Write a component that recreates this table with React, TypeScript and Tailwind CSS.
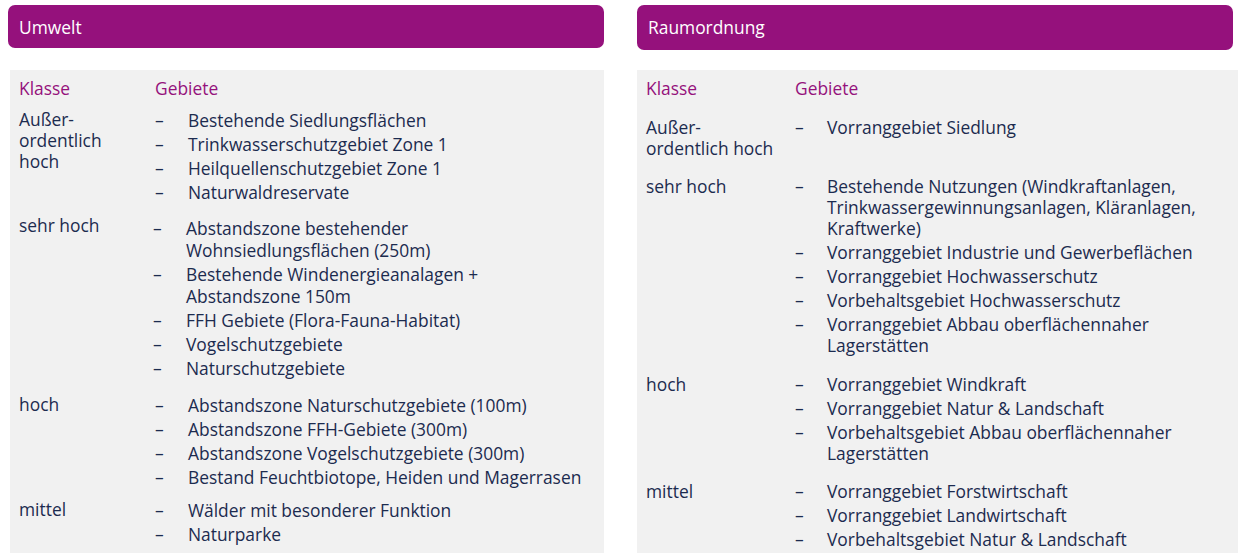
import React from "react";

type Group = {
    label: React.ReactNode;
    items: React.ReactNode[];
    top: string;
    itemsClass?: string;
};

const leftGroups: Group[] = [
    {
        label: (<>Außer-<br />ordentlich<br />hoch</>),
        items: [
            "Bestehende Siedlungsflächen",
            "Trinkwasserschutzgebiet Zone 1",
            "Heilquellenschutzgebiet Zone 1",
            "Naturwaldreservate",
        ],
        top: "mt-[10px]",
    },
    {
        label: "sehr hoch",
        items: [
            (<>Abstandszone bestehender<br />Wohnsiedlungsflächen (250m)</>),
            (<>Bestehende Windenergieanalagen +<br />Abstandszone 150m</>),
            "FFH Gebiete (Flora-Fauna-Habitat)",
            "Vogelschutzgebiete",
            "Naturschutzgebiete",
        ],
        top: "mt-[12px]",
        itemsClass: "mt-[2px] -ml-[2px]",
    },
    {
        label: "hoch",
        items: [
            "Abstandszone Naturschutzgebiete (100m)",
            "Abstandszone FFH-Gebiete (300m)",
            "Abstandszone Vogelschutzgebiete (300m)",
            "Bestand Feuchtbiotope, Heiden und Magerrasen",
        ],
        top: "mt-[15px]",
    },
    {
        label: "mittel",
        items: ["Wälder mit besonderer Funktion", "Naturparke"],
        top: "mt-[11px]",
    },
];

const rightGroups: Group[] = [
    {
        label: (<>Außer-<br />ordentlich hoch</>),
        items: ["Vorranggebiet Siedlung"],
        top: "mt-[18px]",
    },
    {
        label: "sehr hoch",
        items: [
            (<>Bestehende Nutzungen (Windkraftanlagen,<br />Trinkwassergewinnungsanlagen, Kläranlagen,<br />Kraftwerke)</>),
            "Vorranggebiet Industrie und Gewerbeflächen",
            "Vorranggebiet Hochwasserschutz",
            "Vorbehaltsgebiet Hochwasserschutz",
            (<>Vorranggebiet Abbau oberflächennaher<br />Lagerstätten</>),
        ],
        top: "mt-[17px]",
    },
    {
        label: "hoch",
        items: [
            "Vorranggebiet Windkraft",
            "Vorranggebiet Natur & Landschaft",
            (<>Vorbehaltsgebiet Abbau oberflächennaher<br />Lagerstätten</>),
        ],
        top: "mt-[18px]",
    },
    {
        label: "mittel",
        items: [
            "Vorranggebiet Forstwirtschaft",
            "Vorranggebiet Landwirtschaft",
            "Vorbehaltsgebiet Natur & Landschaft",
        ],
        top: "mt-[17px]",
    },
];

function Panel({
    title,
    groups,
    labelW,
    dashW,
    leading,
    gap,
    bodyClass,
}: {
    title: string;
    groups: Group[];
    labelW: string;
    dashW: string;
    leading: string;
    gap: string;
    bodyClass: string;
}) {
    return (
        <div className="flex flex-col">
            <div className="h-[45px] w-[596px] rounded-[7px] bg-[#95117c] px-[11px] flex items-center text-white">
                {title}
            </div>
            <div className={bodyClass}>
                <div className="flex leading-[21px] text-[#95117c]">
                    <div className={labelW}>Klasse</div>
                    <div>Gebiete</div>
                </div>
                {groups.map((g, i) => (
                    <div key={i} className={`flex ${g.top}`}>
                        <div className={`${labelW} shrink-0 leading-[21px]`}>{g.label}</div>
                        <ul className={`flex flex-col ${gap} ${g.itemsClass ?? ""}`}>
                            {g.items.map((it, j) => (
                                <li key={j} className={`flex ${leading} whitespace-nowrap`}>
                                    <span className={`${dashW} shrink-0`}>–</span>
                                    <span>{it}</span>
                                </li>
                            ))}
                        </ul>
                    </div>
                ))}
            </div>
        </div>
    );
}

export default function App() {
    return (
        <div className="w-[1238px] h-[553px] overflow-hidden bg-white font-['Open_Sans',sans-serif] text-[17.4px] text-[#1c2b4f] flex pl-[8px] pt-[5px]">
            <Panel
                title="Umwelt"
                groups={leftGroups}
                labelW="w-[136px]"
                dashW="w-[33px]"
                leading="leading-[22px]"
                gap="gap-[2px]"
                bodyClass="mt-[22px] ml-[2px] w-[594px] h-[500px] bg-[#f1f1f1] pl-[9px] pt-[8px]"
            />
            <div className="ml-[33px]">
                <Panel
                    title="Raumordnung"
                    groups={rightGroups}
                    labelW="w-[149px]"
                    dashW="w-[32px]"
                    leading="leading-[21px]"
                    gap="gap-[3px]"
                    bodyClass="mt-[20px] w-[601px] h-[500px] bg-[#f1f1f1] pl-[9px] pt-[8px]"
                />
            </div>
        </div>
    );
}
